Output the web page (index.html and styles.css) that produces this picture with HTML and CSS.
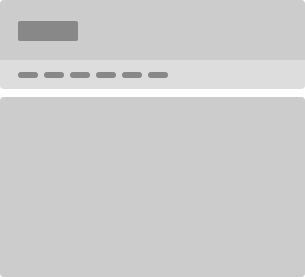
FILE: index.html
```html
<!DOCTYPE html>
<html lang="en">
<head>
  <meta charset="UTF-8">
  <meta name="viewport" content="width=device-width, initial-scale=1.0">
  <title>Loading</title>
  <link rel="stylesheet" href="styles.css">
</head>
<body>

  <div class="page">

    <!-- Header placeholder -->
    <div class="top-card">
      <div class="header">
        <div class="logo-block"></div>
      </div>
      <div class="nav">
        <span class="pill"></span>
        <span class="pill"></span>
        <span class="pill"></span>
        <span class="pill"></span>
        <span class="pill"></span>
        <span class="pill"></span>
      </div>
    </div>

    <!-- Content placeholder -->
    <div class="content-card"></div>

  </div>

</body>
</html>
```

FILE: styles.css
```css
/* General styling */
body {
  margin: 0;
  padding: 0;
  background-color: #fff;
  font-family: 'Liberation Sans', Arial, sans-serif;
}

.page {
  display: flex;
  flex-direction: column;
  gap: 8px;
  height: 277px;
}

/* Header placeholder */
.top-card {
  border-radius: 4px;
  overflow: hidden;
}

.header {
  background-color: #ccc;
  height: 60px;
  padding: 21px 18px 0;
  box-sizing: border-box;
}

.logo-block {
  width: 60px;
  height: 20px;
  background-color: #888;
  border-radius: 2px;
}

.nav {
  background-color: #ddd;
  height: 29px;
  padding: 12px 18px 0;
  box-sizing: border-box;
  display: flex;
  gap: 6px;
}

.pill {
  width: 20px;
  height: 6px;
  background-color: #888;
  border-radius: 3px;
}

/* Content placeholder */
.content-card {
  flex: 1;
  background-color: #ccc;
  border-radius: 4px;
}
```
